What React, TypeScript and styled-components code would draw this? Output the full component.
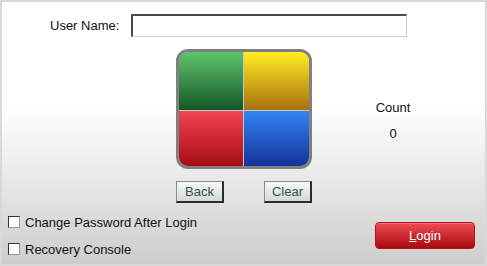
import styled, { createGlobalStyle } from 'styled-components';

const GlobalStyle = createGlobalStyle`
	html, body {
		margin: 0;
		padding: 0;
		background: #ffffff;
	}
	body {
		font-family: 'Liberation Sans', Arial, sans-serif;
		font-size: 13px;
		color: #111111;
	}
`;

const quadrants = [
	{ key: 'green', top: '#5fc46c', bottom: '#145626' },
	{ key: 'yellow', top: '#ffee22', bottom: '#a8700f' },
	{ key: 'red', top: '#f24454', bottom: '#a50c12' },
	{ key: 'blue', top: '#3184f4', bottom: '#15329a' },
];

const App = () => {
	return (
		<>
			<GlobalStyle />
			<Frame>
				<UserRow>
					<Label htmlFor="user">User Name:</Label>
					<TextInput id="user" type="text" />
				</UserRow>
				<Middle>
					<div />
					<CenterColumn>
						<ColorPad>
							{quadrants.map((q) => (
								<Quadrant key={q.key} $top={q.top} $bottom={q.bottom} />
							))}
						</ColorPad>
						<ButtonRow>
							<GrayButton>Back</GrayButton>
							<GrayButton>Clear</GrayButton>
						</ButtonRow>
					</CenterColumn>
					<CountColumn>
						<span>Count</span>
						<span>0</span>
					</CountColumn>
				</Middle>
				<Bottom>
					<Options>
						<Option>
							<Check type="checkbox" />
							Change Password After Login
						</Option>
						<Option>
							<Check type="checkbox" />
							Recovery Console
						</Option>
					</Options>
					<LoginButton>
						<u>L</u>ogin
					</LoginButton>
				</Bottom>
			</Frame>
		</>
	);
};

const Frame = styled.div`
	box-sizing: border-box;
	width: 487px;
	height: 266px;
	border: 2px solid #d8d8d8;
	background: linear-gradient(to bottom, #ffffff 0%, #ffffff 40%, #cdcdcd 100%);
	display: flex;
	flex-direction: column;
`;

const UserRow = styled.div`
	display: flex;
	align-items: center;
	padding: 12px 0 0 48px;
`;

const Label = styled.label`
	width: 81px;
	font-size: 13px;
	color: #111111;
`;

const TextInput = styled.input`
	box-sizing: border-box;
	width: 276px;
	height: 23px;
	margin: 0;
	padding: 2px 4px;
	background: #ffffff;
	border-top: 2px solid #4a4a4a;
	border-left: 2px solid #4a4a4a;
	border-right: 1px solid #d4d0c8;
	border-bottom: 1px solid #d4d0c8;
	outline: none;
	font-family: inherit;
	font-size: 13px;
`;

const Middle = styled.div`
	display: grid;
	grid-template-columns: 174px 136px 162px;
	margin-top: 12px;
`;

const CenterColumn = styled.div`
	display: flex;
	flex-direction: column;
	gap: 12px;
`;

const ColorPad = styled.div`
	box-sizing: border-box;
	width: 136px;
	height: 120px;
	border: 3px solid #808080;
	border-radius: 12px;
	overflow: hidden;
	background: #c8c8c8;
	display: grid;
	grid-template-columns: 64px 65px;
	grid-template-rows: 58px 55px;
	gap: 1px;
`;

const Quadrant = styled.div<{ $top: string; $bottom: string }>`
	background: linear-gradient(to bottom, ${(p) => p.$top}, ${(p) => p.$bottom});
`;

const ButtonRow = styled.div`
	display: flex;
	justify-content: space-between;
`;

const GrayButton = styled.button`
	box-sizing: border-box;
	width: 48px;
	height: 22px;
	padding: 0;
	margin: 0;
	background: linear-gradient(to bottom, #f6f7f6, #d6d9d7);
	border-top: 1px solid #8a8a8a;
	border-left: 1px solid #8a8a8a;
	border-right: 2px solid #2a2a2a;
	border-bottom: 2px solid #2a2a2a;
	font-family: inherit;
	font-size: 13px;
	color: #2e5450;
`;

const CountColumn = styled.div`
	display: flex;
	flex-direction: column;
	align-items: center;
	gap: 10px;
	padding-top: 51px;
	font-size: 13px;
	line-height: 16px;
	color: #111111;
`;

const Bottom = styled.div`
	display: flex;
	justify-content: space-between;
	align-items: flex-start;
	margin-top: 9px;
	padding: 0 10px 0 6px;
`;

const Options = styled.div`
	display: flex;
	flex-direction: column;
	gap: 7px;
`;

const Option = styled.label`
	display: flex;
	align-items: center;
	gap: 5px;
	height: 20px;
	font-size: 13px;
	color: #111111;
`;

const Check = styled.input`
	appearance: none;
	box-sizing: border-box;
	width: 12px;
	height: 12px;
	margin: 0;
	background: #ffffff;
	border-top: 1px solid #333333;
	border-left: 1px solid #333333;
	border-right: 1px solid #9a9a9a;
	border-bottom: 1px solid #9a9a9a;
`;

const LoginButton = styled.button`
	box-sizing: border-box;
	width: 100px;
	height: 27px;
	margin-top: 10px;
	padding: 0;
	border: 1px solid #b3141c;
	border-radius: 4px;
	background: linear-gradient(to bottom, #ef4c55, #a80a0c);
	box-shadow: inset 0 1px 0 rgba(255, 255, 255, 0.25);
	font-family: inherit;
	font-size: 13px;
	color: #ffffff;
`;

export default App;
